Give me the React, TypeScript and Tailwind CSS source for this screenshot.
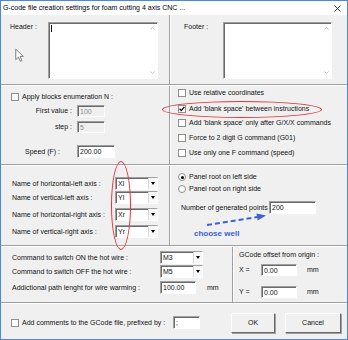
import React from "react";

type Box = { className?: string; children?: React.ReactNode };

// sunken 3D edge used by edits and combos
function Sunken({ className = "", children }: Box) {
  return (
    <div
      className={`flex items-center border border-t-[#a0a0a0] border-l-[#a0a0a0] border-r-white border-b-white shadow-[inset_1px_1px_0_#696969] ${className}`}
    >
      {children}
    </div>
  );
}

function TextBox({ value, className = "", disabled }: { value: string; className?: string; disabled?: boolean }) {
  return (
    <Sunken className={`${disabled ? "bg-[#f0f0f0] text-[#8d8d8d]" : "bg-white"} pl-[2px] ${className}`}>
      <span className="leading-none">{value}</span>
    </Sunken>
  );
}

function Combo({ value, className = "" }: { value: string; className?: string }) {
  return (
    <Sunken className={`bg-white ${className}`}>
      <span className="flex-1 pl-[2px] leading-none">{value}</span>
      <div className="h-full w-[9px] flex items-center justify-center bg-[#f8f8f8] border-l border-l-[#dadada]">
        <div className="w-0 h-0 border-l-[2.5px] border-r-[2.5px] border-t-[3px] border-l-transparent border-r-transparent border-t-black" />
      </div>
    </Sunken>
  );
}

function Check({ checked }: { checked?: boolean }) {
  return (
    <div className="w-[8px] h-[8px] shrink-0 bg-white border border-[#8f8f8f] flex items-center justify-center">
      {checked && (
        <svg width="6" height="6" viewBox="0 0 6 6">
          <path d="M0.6 2.8 L2.3 4.6 L5.4 0.9" stroke="#000" strokeWidth="1.3" fill="none" />
        </svg>
      )}
    </div>
  );
}

function Radio({ checked }: { checked?: boolean }) {
  return (
    <div className="w-[8px] h-[8px] shrink-0 rounded-full bg-white border border-[#8f8f8f] flex items-center justify-center">
      {checked && <div className="w-[3px] h-[3px] rounded-full bg-black" />}
    </div>
  );
}

function Memo({ className = "", caret }: { className?: string; caret?: boolean }) {
  return (
    <Sunken className={`bg-white items-stretch ${className}`}>
      <div className="flex-1 pt-[2px] pl-[2px]">
        {caret && <div className="w-px h-[7px] bg-black" />}
      </div>
      <div className="w-[9px] flex flex-col justify-between items-center py-[4px]">
        <svg width="5" height="3" viewBox="0 0 5 3">
          <path d="M0.5 2.5 L2.5 0.5 L4.5 2.5" stroke="#c4c4c4" fill="none" />
        </svg>
        <svg width="5" height="3" viewBox="0 0 5 3">
          <path d="M0.5 0.5 L2.5 2.5 L4.5 0.5" stroke="#c4c4c4" fill="none" />
        </svg>
      </div>
    </Sunken>
  );
}

function Button({ label, className = "" }: { label: string; className?: string }) {
  return (
    <div
      className={`flex items-center justify-center h-[20px] bg-[#f0f0f0] border border-t-white border-l-white border-r-[#696969] border-b-[#696969] shadow-[1px_1px_0_#a0a0a0] ${className}`}
    >
      {label}
    </div>
  );
}

const HLine = () => <div className="h-[2px] shrink-0 border-t border-t-[#a0a0a0] border-b border-b-white" />;
const VLine = () => <div className="w-[2px] shrink-0 self-stretch border-l border-l-[#a0a0a0] border-r border-r-white" />;

function CheckRow({ label, checked, className = "" }: { label: string; checked?: boolean; className?: string }) {
  return (
    <div className={`flex items-center gap-[3px] h-[10px] ${className}`}>
      <Check checked={checked} />
      <span className="whitespace-nowrap">{label}</span>
    </div>
  );
}

export default function App() {
  return (
    <div className="relative w-[348px] h-[340px] border border-[#4a8ad4] bg-[#f0f0f0] text-[7px] leading-[10px] text-[#111] font-['Liberation_Sans',Arial,sans-serif] overflow-hidden">
      {/* Title bar */}
      <div className="h-[14px] bg-white flex items-center justify-between pl-[2px] pr-[6px]">
        <span className="text-[7px] text-black whitespace-nowrap">
          G-code file creation settings for foam cutting 4 axis CNC ...
        </span>
        <svg width="7" height="7" viewBox="0 0 7 7">
          <path d="M0.5 0.5 L6.5 6.5 M6.5 0.5 L0.5 6.5" stroke="#222" strokeWidth="0.9" />
        </svg>
      </div>

      {/* Header / Footer */}
      <div className="flex h-[69px]">
        <div className="relative w-[168px] flex items-start pt-[7px] pl-[9px]">
          <span className="w-[38px]">Header :</span>
          <Memo className="w-[110px] h-[57px]" caret />
          <svg className="absolute left-[14px] top-[33px]" width="9" height="15" viewBox="0 0 12 19">
            <path d="M1 1 L1 15 L4.5 11.7 L7 17.3 L9.2 16.3 L6.7 10.7 L11 10.7 Z" fill="#fff" stroke="#555" strokeWidth="1" />
          </svg>
        </div>
        <VLine />
        <div className="flex-1 flex items-start pt-[7px] pl-[13px]">
          <span className="w-[39px]">Footer :</span>
          <Memo className="w-[109px] h-[57px]" />
        </div>
      </div>
      <HLine />

      {/* Options */}
      <div className="flex h-[78px]">
        <div className="w-[168px] flex flex-col">
          <CheckRow label="Apply blocks enumeration N :" className="mt-[6px] pl-[10px]" />
          <div className="mt-[3px] h-[12px] flex items-center">
            <span className="w-[71px] text-right">First value :</span>
            <TextBox value="100" disabled className="ml-[5px] w-[28px] h-[12px]" />
          </div>
          <div className="mt-[4px] h-[12px] flex items-center">
            <span className="w-[71px] text-right">step :</span>
            <TextBox value="5" disabled className="ml-[5px] w-[28px] h-[12px]" />
          </div>
          <div className="mt-[12px] h-[13px] flex items-center pl-[24px]">
            <span className="w-[52px]">Speed (F) :</span>
            <TextBox value="200.00" className="w-[38px] h-[13px]" />
          </div>
        </div>
        <VLine />
        <div className="flex-1 flex flex-col pl-[7px]">
          <CheckRow label="Use relative coordinates" className="mt-[2px]" />
          <CheckRow label="Add 'blank space' between instructions" checked className="mt-[6px]" />
          <CheckRow label="Add 'blank space' only after G/X/X commands" className="mt-[4px]" />
          <CheckRow label="Force to 2 digit G command (G01)" className="mt-[5px]" />
          <CheckRow label="Use only one F command (speed)" className="mt-[5px]" />
        </div>
      </div>
      <HLine />

      {/* Axes */}
      <div className="flex h-[79px]">
        <div className="w-[168px] flex flex-col pl-[11px]">
          {[
            ["Name of horizontal-left axis :", "Xl", "mt-[11px]"],
            ["Name of vertical-left axis :", "Yl", "mt-[1px]"],
            ["Name of horizontal-right axis :", "Xr", "mt-[4px]"],
            ["Name of vertical-right axis :", "Yr", "mt-[4px]"],
          ].map(([label, value, mt]) => (
            <div key={label} className={`h-[13px] flex items-center ${mt}`}>
              <span className="w-[103px] whitespace-nowrap">{label}</span>
              <Combo value={value} className="w-[43px] h-[13px]" />
            </div>
          ))}
        </div>
        <VLine />
        <div className="relative flex-1 flex flex-col">
          <div className="mt-[6px] h-[10px] flex items-center gap-[3px] pl-[7px]">
            <Radio checked />
            <span>Panel root on left side</span>
          </div>
          <div className="mt-[2px] h-[10px] flex items-center gap-[3px] pl-[7px]">
            <Radio />
            <span>Panel root on right side</span>
          </div>
          <div className="mt-[7px] h-[13px] flex items-center pl-[10px]">
            <span className="w-[88px] whitespace-nowrap">Number of generated points :</span>
            <TextBox value="200" className="w-[47px] h-[13px]" />
          </div>
          <div className="mt-[15px] h-[10px] pl-[23px] text-[8px] font-bold text-[#3d5fd9] leading-[10px]">
            choose well
          </div>
          <svg className="absolute left-0 top-0" width="120" height="79" viewBox="0 0 120 79">
            <line x1="36" y1="59" x2="86.1" y2="51" stroke="#3d5fd9" strokeWidth="2" strokeDasharray="5 3" />
            <polygon points="95,49.5 86.7,54.5 85.5,47.5" fill="#3d5fd9" />
          </svg>
        </div>
      </div>
      <HLine />

      {/* Hot wire */}
      <div className="flex h-[55px]">
        <div className="w-[231px] flex flex-col pl-[11px]">
          <div className="mt-[4px] h-[13px] flex items-center">
            <span className="w-[148px]">Command to switch ON the hot wire :</span>
            <Combo value="M3" className="w-[43px] h-[13px]" />
          </div>
          <div className="mt-[1px] h-[13px] flex items-center">
            <span className="w-[148px]">Command to switch OFF the hot wire :</span>
            <Combo value="M5" className="w-[43px] h-[13px]" />
          </div>
          <div className="mt-[3px] h-[13px] flex items-center">
            <span className="w-[148px]">Addictional path lenght for wire warming :</span>
            <TextBox value="100.00" className="w-[36px] h-[13px]" />
            <span className="ml-[11px]">mm</span>
          </div>
        </div>
        <VLine />
        <div className="flex-1 flex flex-col pl-[5px]">
          <div className="mt-[3px] h-[10px]">GCode offset from origin :</div>
          <div className="mt-[4px] h-[12px] flex items-center">
            <span className="w-[22px]">X =</span>
            <TextBox value="0.00" className="w-[36px] h-[12px]" />
            <span className="ml-[10px]">mm</span>
          </div>
          <div className="mt-[10px] h-[12px] flex items-center">
            <span className="w-[22px]">Y =</span>
            <TextBox value="0.00" className="w-[36px] h-[12px]" />
            <span className="ml-[10px]">mm</span>
          </div>
        </div>
      </div>
      <HLine />

      {/* Footer row */}
      <div className="h-[35px] flex items-center pt-[2px] pl-[10px]">
        <Check />
        <span className="ml-[3px] w-[151px] whitespace-nowrap">Add comments to the GCode file, prefixed by :</span>
        <TextBox value=";" className="w-[27px] h-[13px]" />
        <Button label="OK" className="ml-[31px] w-[44px]" />
        <Button label="Cancel" className="ml-[10px] w-[56px]" />
      </div>

      {/* red annotations */}
      <div className="absolute left-[161px] top-[100px] w-[160px] h-[17px] rounded-[50%] border-[1.5px] border-[#e8323c]" />
      <div className="absolute left-[110px] top-[160px] w-[20px] h-[89px] rounded-[50%] border-[1.5px] border-[#e8323c]" />
    </div>
  );
}
